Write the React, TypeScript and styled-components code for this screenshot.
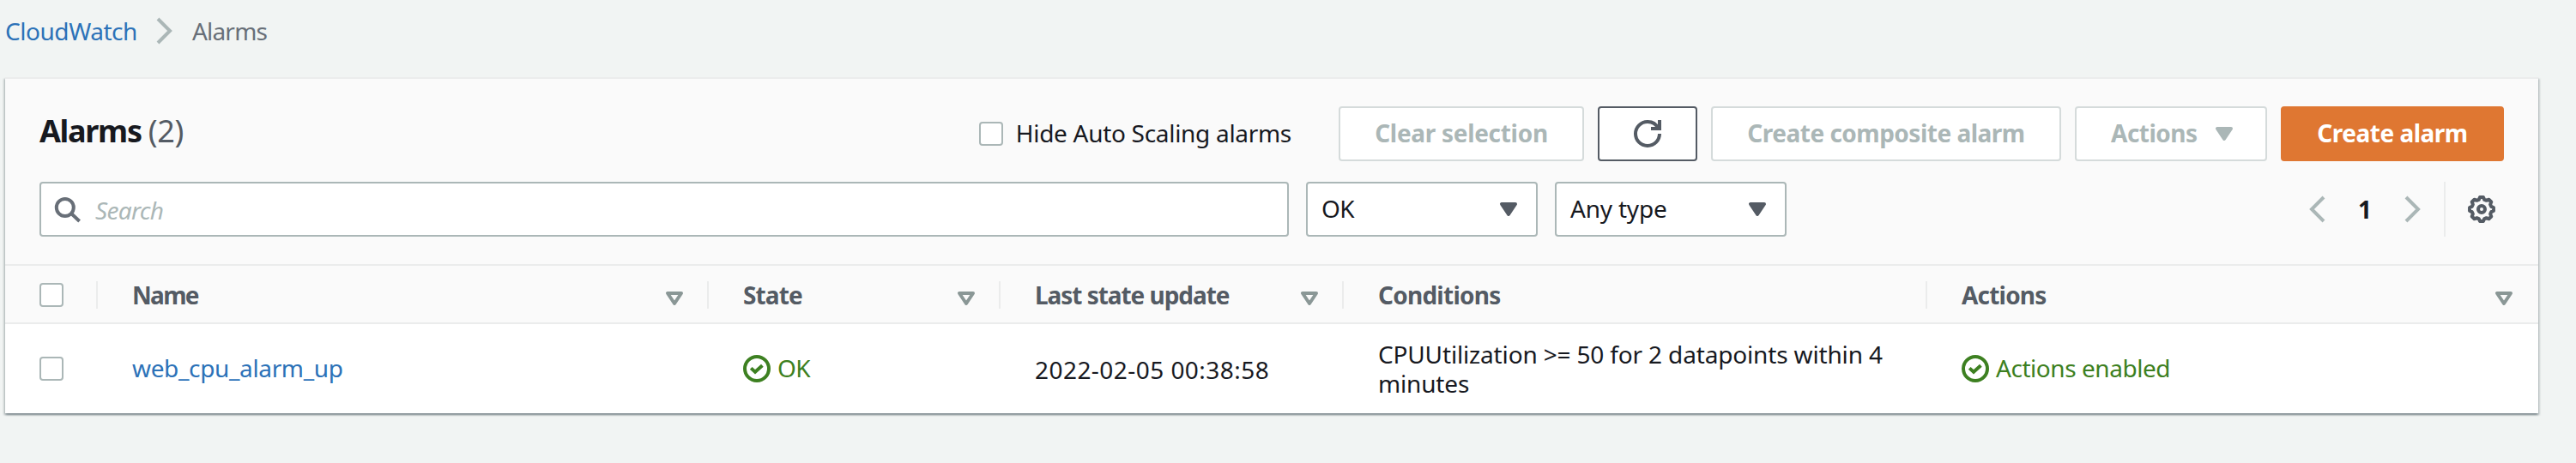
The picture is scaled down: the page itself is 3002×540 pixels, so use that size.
import React from "react";
import styled, { createGlobalStyle } from "styled-components";

const color = {
  page: "#f1f4f3",
  surface: "#fafafa",
  line: "#ebecec",
  text: "#17191f",
  heading: "#545b64",
  muted: "#686f78",
  disabled: "#abb7b7",
  disabledBorder: "#d5dbdb",
  sort: "#8a9796",
  link: "#2c72b8",
  success: "#3d8021",
  primary: "#df7732",
};

const GlobalStyle = createGlobalStyle`
  * { box-sizing: border-box; }
  body {
    margin: 0;
    background: ${color.page};
    color: ${color.text};
    font-family: "Noto Sans", "Open Sans", sans-serif;
    font-size: 28px;
    line-height: 34px;
  }
`;

const Page = styled.main`
  height: 540px;
  padding: 0 44px 0 6px;
  background: ${color.page};
`;

const Label = styled.span<{ $spacing?: number; $drop?: number }>`
  letter-spacing: ${(p) => p.$spacing ?? 0}px;
  padding-top: ${(p) => Math.max(p.$drop ?? 0, 0)}px;
  padding-bottom: ${(p) => Math.max(-(p.$drop ?? 0), 0)}px;
  white-space: nowrap;
`;

const Svg = styled.svg`
  display: block;
  flex: none;
  width: 32px;
  height: 32px;
  fill: none;
  stroke: currentColor;
  stroke-width: 2;
`;

const Breadcrumb = styled.nav`
  display: flex;
  align-items: center;
  height: 90px;
  padding-bottom: 18px;
  color: ${color.muted};

  ${Svg} {
    margin: 0 16px;
    color: ${color.disabled};
  }
`;

const Link = styled.a`
  display: flex;
  color: ${color.link};
  text-decoration: none;
`;

const Panel = styled.section`
  height: 392px;
  border-top: 2px solid ${color.line};
  background: #fff;
  box-shadow: 0 2px 2px 0 rgba(0, 28, 36, 0.3), 2px 2px 2px 0 rgba(0, 28, 36, 0.15),
    -2px 2px 2px 0 rgba(0, 28, 36, 0.15);
`;

const PanelHeader = styled.header`
  height: 218px;
  padding: 32px 40px 0;
  border-bottom: 2px solid ${color.line};
  background: ${color.surface};
`;

const TitleRow = styled.div`
  display: flex;
  align-items: center;
  height: 64px;
`;

const Title = styled.h2`
  display: flex;
  gap: 8px;
  margin: 0;
  padding-bottom: 7px;
  font-size: 36px;
  line-height: 44px;
`;

const Count = styled.span`
  color: ${color.heading};
  font-weight: 400;
  letter-spacing: -0.3px;
`;

const CheckField = styled.label`
  display: flex;
  align-items: center;
  gap: 15px;
  margin: 0 55px 0 auto;
`;

const Checkbox = styled.span`
  width: 28px;
  height: 28px;
  border: 2px solid ${color.disabled};
  border-radius: 4px;
  background: #fff;
`;

const ButtonGroup = styled.div`
  display: flex;
  gap: 16px;
`;

const Button = styled.button<{ $width: number; $variant?: "normal" | "primary" }>`
  display: flex;
  align-items: center;
  justify-content: center;
  gap: 15px;
  width: ${(p) => p.$width}px;
  height: 64px;
  padding: 0;
  border: 2px solid
    ${(p) => (p.$variant === "primary" ? color.primary : p.$variant === "normal" ? color.heading : color.disabledBorder)};
  border-radius: 4px;
  background: ${(p) => (p.$variant === "primary" ? color.primary : "#fff")};
  color: ${(p) => (p.$variant === "primary" ? "#fff" : p.$variant === "normal" ? color.heading : color.disabled)};
  font: inherit;
  font-weight: 700;
`;

const MenuButton = styled(Button)`
  justify-content: space-between;
  padding: 0 32px 0 40px;
`;

const FilterRow = styled.div`
  display: flex;
  align-items: center;
  gap: 20px;
  margin-top: 24px;
`;

const Field = styled.div<{ $width: number }>`
  display: flex;
  align-items: center;
  width: ${(p) => p.$width}px;
  height: 64px;
  padding: 0 16px;
  border: 2px solid ${color.disabled};
  border-radius: 4px;
  background: #fff;
`;

const Search = styled(Field)`
  gap: 17px;
  padding-left: 14px;
  color: ${color.muted};

  ${Label} {
    color: ${color.disabled};
    font-style: italic;
  }
`;

const Select = styled(Field)`
  justify-content: space-between;

  ${Svg} {
    color: ${color.heading};
  }
`;

const Pagination = styled.div`
  display: flex;
  align-items: center;
  height: 64px;
  margin-left: auto;
  color: ${color.disabled};
`;

const PageNumber = styled.span`
  width: 80px;
  padding-bottom: 1px;
  color: ${color.text};
  font-weight: 700;
  text-align: center;
`;

const Preferences = styled.div`
  display: flex;
  align-items: center;
  height: 64px;
  margin-left: 20px;
  padding: 0 10px 0 26px;
  border-left: 2px solid ${color.line};
  color: ${color.heading};
`;

const Row = styled.div`
  display: grid;
  grid-template-columns: 108px 712px 340px 400px 680px 712px;
  align-items: center;
  height: 104px;
`;

const HeaderRow = styled(Row)`
  height: 68px;
  padding-top: 2px;
  border-bottom: 2px solid ${color.line};
  background: ${color.surface};
  color: ${color.heading};
  font-weight: 700;
`;

const HeaderCell = styled.div<{ $last?: boolean }>`
  display: flex;
  align-items: center;
  justify-content: space-between;
  height: 32px;
  padding: 0 ${(p) => (p.$last ? 24 : 22)}px 0 40px;
  border-right: ${(p) => (p.$last ? 0 : 2)}px solid ${color.line};

  ${Svg} {
    margin-top: 8px;
    color: ${color.sort};
  }
`;

const Cell = styled.div`
  display: flex;
  align-items: center;
  padding: 0 40px;
`;

const Condition = styled.p`
  margin: 0;
  letter-spacing: -0.16px;
`;

const Status = styled.div`
  display: flex;
  align-items: center;
  gap: 8px;
  color: ${color.success};
`;

const ChevronRight = () => (
  <Svg viewBox="0 0 16 16"><path d="M4 1l7 7-7 7" /></Svg>
);
const ChevronLeft = () => (
  <Svg viewBox="0 0 16 16"><path d="M12 1L5 8l7 7" /></Svg>
);
const Caret = () => (
  <Svg viewBox="0 0 16 16"><path d="M4 5h8l-4 6z" fill="currentColor" strokeLinejoin="round" /></Svg>
);
const SortIcon = () => (
  <Svg viewBox="0 0 16 16"><path d="M4 5h8l-4 6z" strokeLinejoin="round" /></Svg>
);
const SearchIcon = () => (
  <Svg viewBox="0 0 16 16"><circle cx="6.9" cy="7" r="5" /><path d="M10.4 10.4l4.9 4.6" /></Svg>
);
const RefreshIcon = () => (
  <Svg viewBox="0 0 16 16">
    <path d="M10 5h5V0" />
    <path d="M15 8a6.957 6.957 0 01-7 7 6.957 6.957 0 01-7-7 6.957 6.957 0 017-7 6.87 6.87 0 016.3 4" />
  </Svg>
);
const CheckIcon = () => (
  <Svg viewBox="0 0 16 16"><circle cx="8" cy="8" r="7" /><path d="M4.6 7.7l2.4 2.2 4.2-3.8" /></Svg>
);

const gearPoints = Array.from({ length: 8 }, (_, k) =>
  [[-8, 14.1], [8, 14.1], [16, 11.6], [29, 11.6]].map(([offset, radius]) => {
    const angle = ((k * 45 + offset) * Math.PI) / 180;
    return `${(16 + radius * Math.sin(angle)).toFixed(2)},${(16 - radius * Math.cos(angle)).toFixed(2)}`;
  }).join(" "),
).join(" ");

const GearIcon = () => (
  <Svg viewBox="0 0 32 32">
    <g strokeWidth="4">
      <polygon points={gearPoints} strokeLinejoin="round" />
      <circle cx="16" cy="16" r="4" />
    </g>
  </Svg>
);

const columns = [
  { name: "Name", spacing: -1.7, sortable: true },
  { name: "State", spacing: -0.9, sortable: true },
  { name: "Last state update", spacing: -1.05, sortable: true },
  { name: "Conditions", spacing: -0.75, sortable: false },
  { name: "Actions", spacing: -0.8, sortable: true },
];

export default function App() {
  return (
    <Page>
      <GlobalStyle />
      <Breadcrumb>
        <Link><Label $spacing={-0.45}>CloudWatch</Label></Link>
        <ChevronRight />
        <Label $spacing={-0.8}>Alarms</Label>
      </Breadcrumb>
      <Panel>
        <PanelHeader>
          <TitleRow>
            <Title><Label $spacing={-1.3}>Alarms</Label><Count>(2)</Count></Title>
            <CheckField>
              <Checkbox />
              <Label $spacing={-0.3} $drop={-2}>Hide Auto Scaling alarms</Label>
            </CheckField>
            <ButtonGroup>
              <Button $width={286}><Label $spacing={-0.3} $drop={-2}>Clear selection</Label></Button>
              <Button $width={116} $variant="normal"><RefreshIcon /></Button>
              <Button $width={408}><Label $spacing={-0.5} $drop={-2}>Create composite alarm</Label></Button>
              <MenuButton $width={224}><Label $spacing={-0.5} $drop={-2}>Actions</Label><Caret /></MenuButton>
              <Button $width={260} $variant="primary"><Label $spacing={-0.5} $drop={-2}>Create alarm</Label></Button>
            </ButtonGroup>
          </TitleRow>
          <FilterRow>
            <Search $width={1456}><SearchIcon /><Label $spacing={-0.7} $drop={2}>Search</Label></Search>
            <Select $width={270}><Label $spacing={-0.5} $drop={-2}>OK</Label><Caret /></Select>
            <Select $width={270}><Label $spacing={-0.2} $drop={-2}>Any type</Label><Caret /></Select>
            <Pagination>
              <ChevronLeft />
              <PageNumber>1</PageNumber>
              <ChevronRight />
              <Preferences><GearIcon /></Preferences>
            </Pagination>
          </FilterRow>
        </PanelHeader>
        <HeaderRow>
          <HeaderCell><Checkbox /></HeaderCell>
          {columns.map((column, i) => (
            <HeaderCell key={column.name} $last={i === columns.length - 1}>
              <Label $spacing={column.spacing}>{column.name}</Label>
              {column.sortable && <SortIcon />}
            </HeaderCell>
          ))}
        </HeaderRow>
        <Row>
          <Cell><Checkbox /></Cell>
          <Cell><Link><Label $spacing={-0.35} $drop={-2}>web_cpu_alarm_up</Label></Link></Cell>
          <Cell><Status><CheckIcon /><Label $spacing={-0.5} $drop={-2}>OK</Label></Status></Cell>
          <Cell><Label $spacing={0.45} $drop={2}>2022-02-05 00:38:58</Label></Cell>
          <Cell><Condition>CPUUtilization &gt;= 50 for 2 datapoints within 4 minutes</Condition></Cell>
          <Cell><Status><CheckIcon /><Label $spacing={-0.45} $drop={-2}>Actions enabled</Label></Status></Cell>
        </Row>
      </Panel>
    </Page>
  );
}
